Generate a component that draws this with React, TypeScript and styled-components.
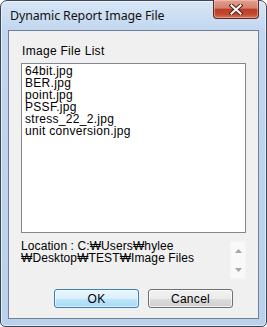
import React from "react"
import styled, { createGlobalStyle } from "styled-components"

const GlobalStyle = createGlobalStyle`
    html, body {
        margin: 0;
        padding: 0;
        background: #ffffff;
    }
    * {
        box-sizing: border-box;
    }
`

const Window = styled.div`
    width: 267px;
    height: 327px;
    display: flex;
    flex-direction: column;
    border: 1px solid #3b4656;
    border-radius: 7px 7px 5px 5px;
    background: linear-gradient(180deg, #d7e6f6 0px, #c2d7ef 28px, #b9d1ea 100%);
    box-shadow: inset 0 0 0 1px rgba(255, 255, 255, 0.55);
    padding: 0 7px 7px 7px;
    font-family: "Liberation Sans", Arial, sans-serif;
`

const TitleBar = styled.div`
    height: 29px;
    display: flex;
    align-items: flex-start;
    justify-content: space-between;
`

const Title = styled.span`
    font-family: "Noto Sans", "Open Sans", sans-serif;
    font-size: 12.4px;
    color: #111;
    margin-top: 7px;
    margin-left: 2px;
    line-height: 15px;
    letter-spacing: -0.1px;
`

const CloseButton = styled.div`
    width: 46px;
    height: 19px;
    margin-top: -1px;
    border: 1px solid #5a2a24;
    border-top: none;
    border-radius: 0 0 4px 4px;
    background: linear-gradient(180deg, #e2a192 0%, #d4806b 45%, #bb3f27 52%, #c24a30 80%, #d9765a 100%);
    box-shadow: inset 0 0 0 1px rgba(255, 210, 200, 0.45);
    display: flex;
    align-items: center;
    justify-content: center;
`

const Client = styled.div`
    flex: 1;
    display: flex;
    flex-direction: column;
    border: 1px solid #6f8097;
    background: #f0f0f0;
    padding: 14px 12px 0 12px;
    font-size: 12px;
    color: #000;
`

const Label = styled.div`
    line-height: 12px;
    padding-left: 1px;
    letter-spacing: 0.3px;
`

const ListBox = styled.div`
    margin-top: 6px;
    height: 170px;
    border: 1px solid #828790;
    background: #ffffff;
    padding: 1px 3px;
`

const ListItem = styled.div`
    line-height: 12px;
    letter-spacing: 0.3px;
    white-space: nowrap;
`

const LocationRow = styled.div`
    margin-top: 8px;
    display: flex;
    align-items: flex-start;
`

const LocationText = styled.div`
    flex: 1;
    line-height: 11.5px;
    letter-spacing: 0.1px;
`

const ScrollBar = styled.div`
    width: 16px;
    height: 38px;
    border: 1px solid #f4f4f4;
    background: #f9f9f9;
    display: flex;
    flex-direction: column;
    justify-content: space-between;
    align-items: center;
    padding: 7px 0 6px;
`

const ButtonRow = styled.div`
    margin-top: 10px;
    display: flex;
    gap: 9px;
    padding-left: 33px;
`

const Button = styled.div<{ $default?: boolean }>`
    width: 85px;
    height: 19px;
    border-radius: 3px;
    border: 1px solid ${p => (p.$default ? "#3c7fb1" : "#707070")};
    background: ${p =>
        p.$default
            ? "linear-gradient(180deg, #eaf6fd 0%, #d9f0fc 50%, #bee6fd 51%, #a7d9f5 100%)"
            : "linear-gradient(180deg, #f2f2f2 0%, #ebebeb 50%, #dddddd 51%, #cfcfcf 100%)"};
    box-shadow: inset 0 0 0 1px ${p => (p.$default ? "rgba(255,255,255,0.6)" : "rgba(255,255,255,0.7)")};
    display: flex;
    align-items: center;
    justify-content: center;
    line-height: 12px;
    letter-spacing: 0.3px;
`

const files = ["64bit.jpg", "BER.jpg", "point.jpg", "PSSF.jpg", "stress_22_2.jpg", "unit conversion.jpg"]

const CloseIcon = () => (
    <svg width="14" height="11" viewBox="0 0 14 11">
        <path d="M2.5 1.5 L11.5 9.5 M11.5 1.5 L2.5 9.5" stroke="#4a1c14" strokeWidth="4" strokeLinecap="square" />
        <path d="M2.5 1.5 L11.5 9.5 M11.5 1.5 L2.5 9.5" stroke="#f4f4f4" strokeWidth="2.2" strokeLinecap="square" />
    </svg>
)

const Arrow = ({ up }: { up?: boolean }) => (
    <svg width="7" height="4" viewBox="0 0 7 4">
        <path d={up ? "M0 4 L3.5 0 L7 4 Z" : "M0 0 L3.5 4 L7 0 Z"} fill="#a6a6a6" />
    </svg>
)

export default function App() {
    return (
        <>
            <GlobalStyle />
            <Window>
                <TitleBar>
                    <Title>Dynamic Report Image File</Title>
                    <CloseButton>
                        <CloseIcon />
                    </CloseButton>
                </TitleBar>
                <Client>
                    <Label>Image File List</Label>
                    <ListBox>
                        {files.map(f => (
                            <ListItem key={f}>{f}</ListItem>
                        ))}
                    </ListBox>
                    <LocationRow>
                        <LocationText>
                            Location : C:₩Users₩hylee
                            <br />
                            ₩Desktop₩TEST₩Image Files
                        </LocationText>
                        <ScrollBar>
                            <Arrow up />
                            <Arrow />
                        </ScrollBar>
                    </LocationRow>
                    <ButtonRow>
                        <Button $default>OK</Button>
                        <Button>Cancel</Button>
                    </ButtonRow>
                </Client>
            </Window>
        </>
    )
}
